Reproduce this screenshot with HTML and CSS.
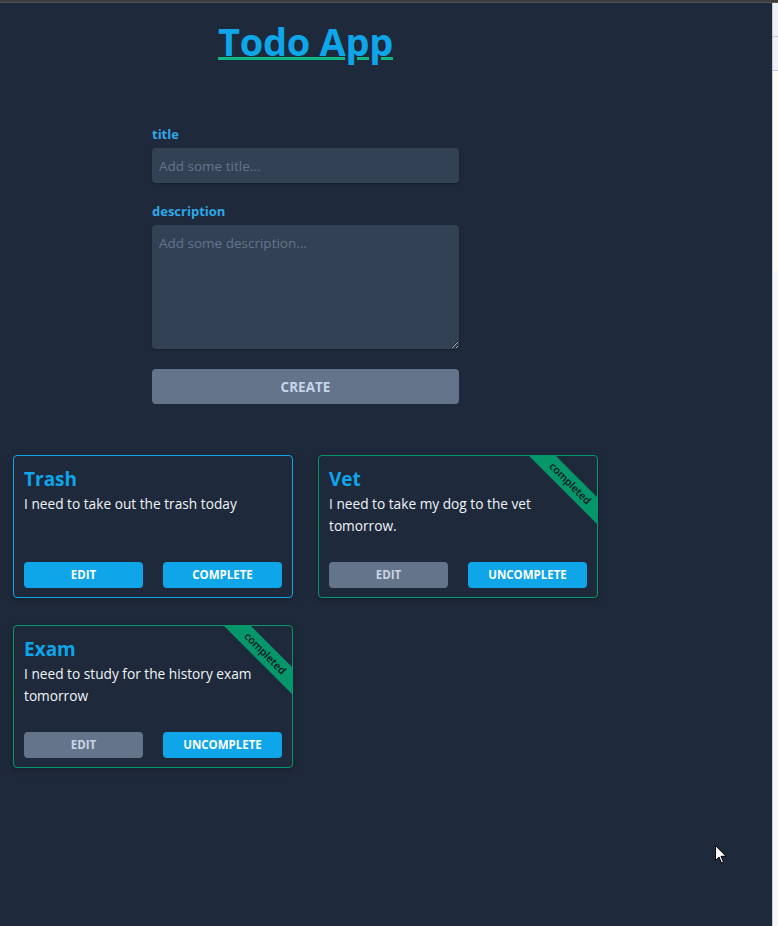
FILE: index.html
```html
<!DOCTYPE html>
<html lang="en">
<head>
<meta charset="utf-8">
<title>Todo App</title>
<link rel="stylesheet" href="styles.css">
</head>
<body>
<div class="topbar"></div>
<div class="frame">
  <main class="main">
    <div class="app">
      <h1 class="app-title">Todo App</h1>
      <form class="todo-form">
        <label class="field-label" for="title">title</label>
        <input class="field-input" id="title" type="text" placeholder="Add some title...">
        <label class="field-label field-label--gap" for="description">description</label>
        <textarea class="field-textarea" id="description" placeholder="Add some description..."></textarea>
        <button class="create-btn" type="button">CREATE</button>
      </form>
      <section class="cards">
        <article class="card">
          <h2 class="card-title">Trash</h2>
          <p class="card-desc">I need to take out the trash today</p>
          <div class="card-actions">
            <button class="btn btn--primary" type="button">EDIT</button>
            <button class="btn btn--primary" type="button">COMPLETE</button>
          </div>
        </article>
        <article class="card card--done">
          <div class="ribbon">completed</div>
          <h2 class="card-title">Vet</h2>
          <p class="card-desc">I need to take my dog to the vet tomorrow.</p>
          <div class="card-actions">
            <button class="btn btn--muted" type="button">EDIT</button>
            <button class="btn btn--primary" type="button">UNCOMPLETE</button>
          </div>
        </article>
        <article class="card card--done">
          <div class="ribbon">completed</div>
          <h2 class="card-title">Exam</h2>
          <p class="card-desc">I need to study for the history exam tomorrow</p>
          <div class="card-actions">
            <button class="btn btn--muted" type="button">EDIT</button>
            <button class="btn btn--primary" type="button">UNCOMPLETE</button>
          </div>
        </article>
      </section>
    </div>
    <svg class="cursor" width="12" height="19" viewBox="0 0 12 19" aria-hidden="true">
      <path d="M0.5 0.5 L0.5 15.5 L4 12 L6.5 18 L8.5 17 L6 11.3 L11 11.3 Z" fill="#fff" stroke="#000" stroke-width="1"/>
    </svg>
  </main>
  <aside class="side">
    <div class="side-seg side-seg--a"></div>
    <div class="side-seg side-seg--b"></div>
    <div class="side-seg side-seg--c"></div>
    <div class="side-seg side-seg--d"></div>
  </aside>
</div>
</body>
</html>
```

FILE: styles.css
```css
* { box-sizing: border-box; }

html, body {
  margin: 0;
  height: 100%;
}

body {
  background: #1e293b;
  font-family: "Open Sans", "Noto Sans", sans-serif;
  color: #e2e8f0;
  overflow: hidden;
}

.topbar {
  height: 3px;
  background: #3d3d3d;
  border-bottom: 1px solid #555;
}

.frame {
  display: flex;
  height: calc(100% - 3px);
}

.main {
  flex: 1;
  position: relative;
}

.app {
  width: 611px;
  display: flex;
  flex-direction: column;
  align-items: center;
}

.app-title {
  margin: 14px 0 0;
  font-size: 38px;
  line-height: 48px;
  font-weight: 700;
  color: #0ea5e9;
  letter-spacing: -0.3px;
  text-decoration: underline;
  text-decoration-color: #10b981;
  text-decoration-thickness: 3px;
  text-underline-offset: 1px;
}

.todo-form {
  width: 307px;
  margin-top: 59px;
  display: flex;
  flex-direction: column;
}

.field-label {
  font-size: 13px;
  line-height: 20px;
  font-weight: 700;
  color: #2ea8e8;
  margin-bottom: 4px;
}

.field-label--gap { margin-top: 18px; }

.field-input,
.field-textarea {
  width: 100%;
  background: #334155;
  border: none;
  border-radius: 4px;
  color: #e2e8f0;
  font-family: inherit;
  font-size: 13.5px;
  outline: none;
  box-shadow: 0 1px 2px rgba(0,0,0,0.25);
}

.field-input {
  height: 35px;
  padding: 0 7px;
}

.field-textarea {
  height: 124px;
  padding: 8px 7px;
  line-height: 20px;
  resize: vertical;
}

.field-input::placeholder,
.field-textarea::placeholder { color: #64748b; }

.create-btn {
  margin-top: 20px;
  height: 35px;
  border: none;
  border-radius: 4px;
  background: #64748b;
  color: #c5d6e8;
  font-family: inherit;
  font-size: 13.5px;
  font-weight: 700;
}

.cards {
  align-self: stretch;
  margin-top: 51px;
  padding: 0 13px;
  display: grid;
  grid-template-columns: 280px 280px;
  column-gap: 25px;
  row-gap: 27px;
}

.card {
  position: relative;
  overflow: hidden;
  border: 1px solid #0ea5e9;
  border-radius: 4px;
  padding: 10px 10px 9px;
  display: flex;
  flex-direction: column;
  box-shadow: 0 2px 6px rgba(0,0,0,0.25);
}

.card--done { border-color: #059669; }

.card-title {
  margin: 0;
  font-size: 19px;
  line-height: 27px;
  font-weight: 700;
  color: #0ea5e9;
}

.card-desc {
  margin: 0;
  font-size: 13.7px;
  line-height: 22.4px;
  color: #f1f5f9;
  min-height: 44.8px;
}

.card-actions {
  margin-top: 24px;
  display: flex;
  justify-content: space-between;
}

.btn {
  width: 119px;
  height: 26px;
  border: none;
  border-radius: 4px;
  font-family: inherit;
  font-size: 11.5px;
  font-weight: 700;
  padding: 0;
}

.btn--primary {
  background: #0ea5e9;
  color: #ffffff;
}

.btn--muted {
  background: #64748b;
  color: #cbd5e1;
}

.ribbon {
  position: absolute;
  top: 18px;
  right: -33px;
  width: 120px;
  height: 19px;
  background: #059669;
  color: #0b1220;
  font-size: 10.5px;
  line-height: 19px;
  font-weight: 600;
  text-align: center;
  transform: rotate(45deg);
}

.cursor {
  position: absolute;
  left: 715px;
  top: 842px;
}

.side {
  width: 6px;
  border-left: 1px solid #c9ccd2;
  display: flex;
  flex-direction: column;
}

.side-seg--a { height: 34px; background: #eef0f5; border-bottom: 1px solid #c3c6cc; }
.side-seg--b { height: 34px; background: #eef0f5; border-bottom: 1px solid #c3c6cc; }
.side-seg--c { height: 200px; background: #fcfcf4; }
.side-seg--d { flex: 1; background: #f7f7f7; }
```
